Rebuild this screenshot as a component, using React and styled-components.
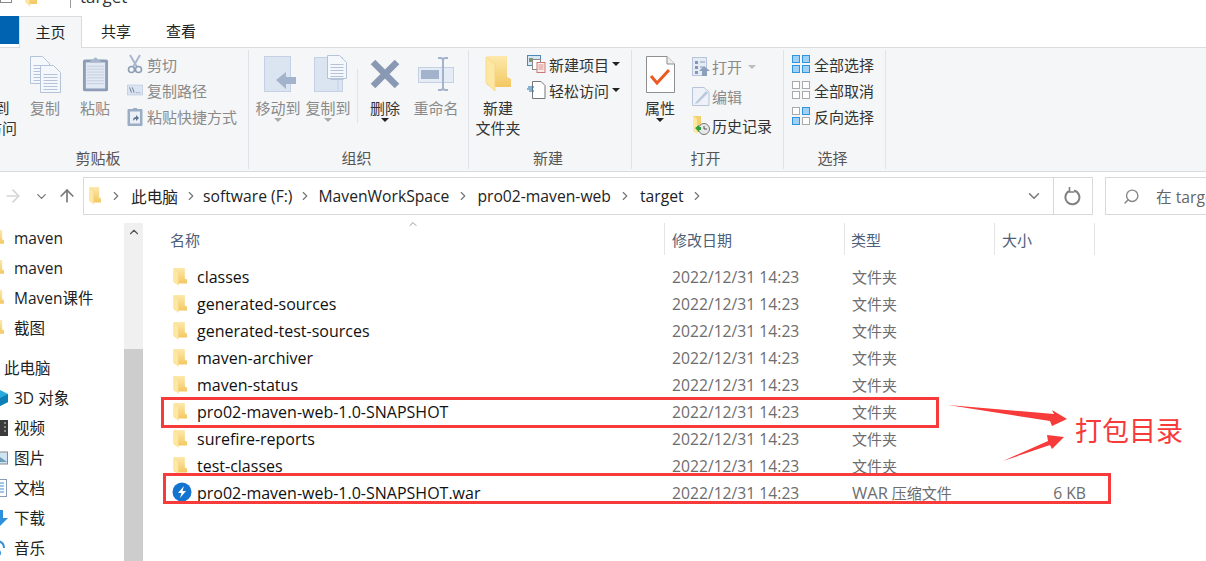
import styled, { createGlobalStyle } from 'styled-components'
import { ArrowRight, ArrowUp, ChevronDown, ChevronRight, ChevronUp, Search } from 'lucide-react'

const Global = createGlobalStyle`
  html, body { margin: 0; padding: 0; background: #fff; }
  body { font-family: "Open Sans", "Noto Sans CJK SC", sans-serif; font-size: 15px; color: #1a1a1a; }
  * { box-sizing: border-box; }
`

const Page = styled.div`
  position: relative;
  width: 1206px;
  height: 561px;
  overflow: hidden;
  background: #fff;
`

/* title bar, cut off by the top of the shot */
const TitleBar = styled.div`
  height: 16px;
  overflow: hidden;
  display: flex;
  align-items: flex-start;
`
const TitleInner = styled.div`
  display: flex;
  align-items: center;
  height: 24px;
  margin-top: -16px;
  font-size: 17px;
  color: #333;
`
const TitleIcon = styled.div`
  width: 12px;
  height: 14px;
  margin-right: 13px;
  border: 1px solid #888;
  background: #fff;
`
const TitleSep = styled.div`
  width: 1px;
  height: 24px;
  background: #999;
  margin: 0 9px 0 13px;
`

const TabBar = styled.div`
  height: 32px;
  display: flex;
  align-items: stretch;
  border-bottom: 1px solid #dadbdc;
`
const FileTab = styled.div`
  width: 19px;
  height: 28px;
  background: #0063b1;
`
const Tab = styled.div`
  width: ${p => p.$w}px;
  height: ${p => (p.$active ? 32 : 31)}px;
  display: flex;
  align-items: center;
  justify-content: center;
  padding-bottom: 2px;
  font-size: 15px;
  color: #222;
  ${p => p.$active && `
    background: #f5f6f7;
    border: 1px solid #dadbdc;
    border-bottom: 0;
  `}
`

const Ribbon = styled.div`
  height: 124px;
  display: flex;
  background: #f5f6f7;
  border-bottom: 1px solid #dadbdc;
  margin-left: -43px;
  width: 1249px;
`
const Group = styled.div`
  width: ${p => p.$w}px;
  flex: none;
  display: flex;
  flex-direction: column;
  height: 119px;
  margin-top: 2px;
  border-right: 1px solid #e1e3e6;
`
const GroupBody = styled.div`
  flex: 1;
  display: flex;
  align-items: flex-start;
  padding-left: ${p => p.$pad || 0}px;
`
const GroupLabel = styled.div`
  height: 20px;
  line-height: 20px;
  margin-bottom: 1px;
  padding-right: ${p => p.$pr || 4}px;
  text-align: center;
  font-size: 15px;
  color: #555;
`
const Large = styled.div`
  width: ${p => p.$w || 50}px;
  margin-right: ${p => p.$mr || 0}px;
  flex: none;
  display: flex;
  flex-direction: column;
  align-items: center;
  color: ${p => (p.$off ? '#8a8a8a' : '#333')};
  font-size: 15px;
  line-height: 20px;
  white-space: nowrap;
  text-align: center;
`
const LargeIcon = styled.div`
  height: 48px;
  display: flex;
  align-items: center;
  justify-content: center;
  padding-left: ${p => p.$shift || 0}px;
`
const Divider = styled.div`
  width: 1px;
  height: 54px;
  margin: 19px 5px 0 0;
  background: #e1e3e6;
`
const SmallCol = styled.div`
  display: flex;
  flex-direction: column;
  padding-top: ${p => p.$top || 1}px;
  margin-left: ${p => p.$ml || 0}px;
`
const Small = styled.div`
  height: ${p => p.$h || 26}px;
  display: flex;
  align-items: center;
  gap: ${p => p.$gap || 4}px;
  font-size: 15px;
  white-space: nowrap;
  color: ${p => (p.$off ? '#8a8a8a' : '#333')};
`
const Caret = styled.span`
  display: inline-block;
  width: 0;
  height: 0;
  border-left: 4px solid transparent;
  border-right: 4px solid transparent;
  border-top: 4px solid ${p => p.$c || '#222'};
  margin-left: ${p => p.$ml || 0}px;
  margin-top: ${p => p.$mt || 0}px;
`

const NavRow = styled.div`
  height: 51px;
  padding-top: 5px;
  display: flex;
  align-items: flex-start;
`
const NavButtons = styled.div`
  width: 83px;
  height: 38px;
  flex: none;
  display: flex;
  align-items: center;
  padding-left: 3px;
`
const NavSlot = styled.span`
  display: flex;
  margin-right: ${p => p.$mr || 0}px;
`
const AddressBar = styled.div`
  width: 1010px;
  height: 38px;
  flex: none;
  display: flex;
  align-items: center;
  border: 1px solid #d9d9d9;
`
const Crumbs = styled.div`
  flex: 1;
  display: flex;
  align-items: center;
  padding-left: 5px;
  font-size: 15.7px;
  color: #222;
`
const Crumb = styled.span`
  display: flex;
  align-items: center;
  white-space: nowrap;
`
const Sep = styled.span`
  display: flex;
  width: ${p => p.$w || 27}px;
  justify-content: center;
  color: #777;
`
const AddressEnd = styled.div`
  width: ${p => p.$w}px;
  height: 36px;
  display: flex;
  align-items: center;
  justify-content: center;
  color: #777;
  ${p => p.$line && 'border-left: 1px solid #d9d9d9;'}
`
const SearchBox = styled.div`
  width: 120px;
  height: 38px;
  flex: none;
  margin-left: 12px;
  display: flex;
  align-items: center;
  gap: 16px;
  padding-left: 17px;
  border: 1px solid #d9d9d9;
  color: #666;
  font-size: 15.7px;
  white-space: nowrap;
`
const SearchGlyph = styled(Search)`
  flex: none;
  color: #888;
  transform: scaleX(-1);
`

const Main = styled.div`
  display: flex;
  height: 338px;
`
const Sidebar = styled.div`
  width: 124px;
  flex: none;
  overflow: hidden;
`
const SideRow = styled.div`
  height: 30px;
  margin-left: ${p => (p.$root ? -18 : -8)}px;
  margin-top: ${p => (p.$root ? 10 : 0)}px;
  padding-bottom: 1px;
  display: flex;
  align-items: center;
  gap: 6px;
  font-size: 15.5px;
  color: #222;
  white-space: nowrap;
`
const SideIcon = styled.span`
  width: 16px;
  height: 18px;
  flex: none;
  display: flex;
  align-items: center;
`
const Scrollbar = styled.div`
  width: 19px;
  flex: none;
  display: flex;
  flex-direction: column;
  background: #f0f0f0;
`
const ScrollUp = styled.div`
  height: 18px;
  display: flex;
  align-items: center;
  justify-content: center;
  color: #555;
`
const ScrollThumb = styled.div`
  margin-top: 108px;
  flex: 1;
  background: #cdcdcd;
`
const Files = styled.div`
  flex: 1;
`
const HeaderRow = styled.div`
  position: relative;
  height: 32px;
  display: grid;
  grid-template-columns: 522px 180px 150px 100px;
`
const HeaderCell = styled.div`
  display: flex;
  align-items: center;
  padding-left: ${p => p.$pad || 7}px;
  border-right: 1px solid #e5e5e5;
  color: #4c607a;
  font-size: 15px;
`
const SortMark = styled.span`
  position: absolute;
  left: 264px;
  top: -5px;
  display: flex;
  color: #999;
`
const FileList = styled.div`
  padding-top: 8px;
`
const FileRow = styled.div`
  height: 27px;
  display: grid;
  grid-template-columns: 522px 180px 150px 100px;
  align-items: center;
  font-size: 16px;
  white-space: nowrap;
`
const NameCell = styled.div`
  display: flex;
  align-items: center;
  gap: 8px;
  padding-left: 30px;
  color: #111;
`
const IconSlot = styled.span`
  width: 16px;
  height: 18px;
  flex: none;
  display: flex;
  align-items: center;
  justify-content: ${p => (p.$center ? 'center' : 'flex-start')};
`
const MetaCell = styled.div`
  padding-left: 7px;
  color: #6d6d6d;
  font-size: ${p => p.$fs || 15}px;
`
const WarType = styled.span`
  font-size: 16.5px;
`
const SizeCell = styled.div`
  padding-right: 9px;
  text-align: right;
  color: #6d6d6d;
  font-size: 15.7px;
`
const WarSvg = styled.svg`
  flex: none;
  margin: -2px 0 0 -1px;
`

/* red marks the author put over the shot */
const RedBox = styled.div`
  position: absolute;
  left: ${p => p.$x}px;
  top: ${p => p.$y}px;
  width: ${p => p.$w}px;
  height: ${p => p.$h}px;
  border: 3px solid #f73a3a;
`
const Arrows = styled.svg`
  position: absolute;
  left: 940px;
  top: 400px;
`
const Note = styled.div`
  position: absolute;
  left: 1075px;
  top: 410px;
  font-family: "Noto Sans CJK SC", sans-serif;
  font-size: 27px;
  line-height: 40px;
  color: #f73a3a;
  white-space: nowrap;
`

const Folder = ({ w = 14, h = 18 }) => (
  <svg width={w} height={h} viewBox="0 0 26 36" preserveAspectRatio="none">
    <defs>
      <linearGradient id="fb" x1="0" y1="0" x2="0" y2="1">
        <stop offset="0" stopColor="#fde9ab" />
        <stop offset="1" stopColor="#f3c863" />
      </linearGradient>
    </defs>
    <path d="M2 0H22V21L26 23V31H10L2 29Z" fill="url(#fb)" />
    <path d="M1 1L10 8V35L1 27Z" fill="#fde7a2" stroke="#f1d27e" strokeWidth=".6" />
  </svg>
)

const DocLines = ({ x, y, w, h }) => (
  <g>
    <path d={`M${x} ${y}H${x + w - 7}L${x + w} ${y + 7}V${y + h}H${x}Z`} fill="#f4f7fb" stroke="#b5c3d9" />
    {[9, 12, 15, 18, 21, 24].map(d => (
      <path key={d} d={`M${x + 3} ${y + d}H${x + w - 3}`} stroke="#b5c3d9" />
    ))}
  </g>
)

const CopyIcon = () => (
  <svg width="31" height="37" viewBox="0 0 31 37">
    <DocLines x={0.5} y={0.5} w={19} h={27} />
    <DocLines x={10.5} y={9.5} w={20} h={27} />
  </svg>
)
const PasteIcon = () => (
  <svg width="27" height="38" viewBox="0 0 28 38">
    <rect x="1" y="4" width="26" height="33" rx="2" fill="#8d9db8" />
    <rect x="4" y="7" width="20" height="27" fill="#e3e9f3" />
    {[11, 14, 17, 20, 23, 26, 29].map(y => <path key={y} d={`M5 ${y}H23`} stroke="#c2cde0" />)}
    <path d="M9 4h3a2 2 0 0 1 4 0h3v3H9z" fill="#a9b6cc" />
  </svg>
)
const MoveIcon = () => (
  <svg width="33" height="37" viewBox="0 0 33 37">
    <rect x=".5" y=".5" width="26" height="35" fill="#dbe4f1" stroke="#c4d0e3" />
    <path d="M12 24L22 16V21H32V28H22V33Z" fill="#a4b3cc" />
  </svg>
)
const CopyToIcon = () => (
  <svg width="33" height="38" viewBox="0 0 33 38">
    <rect x=".5" y="2.5" width="28" height="34" fill="#dbe4f1" stroke="#c4d0e3" />
    <path d="M24 2V36" stroke="#c4d0e3" />
    <DocLines x={13.5} y={0.5} w={19} h={23} />
  </svg>
)
const DeleteIcon = () => (
  <svg width="32" height="32" viewBox="0 0 32 32">
    <path d="M4 4L28 28M28 4L4 28" stroke="#8a99b3" strokeWidth="6.5" />
  </svg>
)
const RenameIcon = () => (
  <svg width="36" height="34" viewBox="0 0 36 34">
    <rect x=".5" y="10.5" width="35" height="15" fill="#e6ecf6" stroke="#c4d0e3" />
    <rect x="3" y="13" width="18" height="9" fill="#a4b3cc" />
    <path d="M20 1h3l2 1 2-1h3M25 2V32M20 33h3l2-1 2 1h3" fill="none" stroke="#a4b3cc" strokeWidth="2" />
  </svg>
)
const Scissors = () => (
  <svg width="16" height="20" viewBox="0 0 16 20">
    <path d="M3 1L10 13M13 1L6 13" stroke="#aab8ce" strokeWidth="2" />
    <circle cx="4.5" cy="15.5" r="3" fill="none" stroke="#8d9db8" strokeWidth="1.6" />
    <circle cx="11.5" cy="15.5" r="3" fill="none" stroke="#8d9db8" strokeWidth="1.6" />
  </svg>
)
const PathIcon = () => (
  <svg width="18" height="12" viewBox="0 0 18 12">
    <rect x=".5" y=".5" width="17" height="11" fill="#dbe4f1" stroke="#c4d0e3" />
    <path d="M3 3L5 9M6 3L8 9M10 9h.8M12 9h.8M14 9h.8" stroke="#66758f" />
  </svg>
)
const ShortcutIcon = () => (
  <svg width="16" height="19" viewBox="0 0 16 19">
    <rect x=".5" y="2" width="15" height="17" rx="1" fill="#9badc6" />
    <rect x="3" y="4.5" width="10" height="12" fill="#eaeff6" />
    <path d="M6 1h4v3H6z" fill="#9badc6" />
    <path d="M6 14c0-3 1-4 3-4V8l3 3-3 3v-2c-1 0-2 .5-3 2z" fill="#5d7392" />
  </svg>
)
const NewItemIcon = () => (
  <svg width="19" height="18" viewBox="0 0 19 18">
    <rect x=".5" y=".5" width="13" height="10" fill="#d9e7f4" stroke="#4d8ab5" />
    <rect x="2" y="3" width="4" height="4" fill="#7a9a6a" />
    <rect x="5.5" y="4.5" width="8" height="10" fill="#fff" stroke="#888" />
    <rect x="10" y="7.5" width="8" height="10" fill="#fbeee6" stroke="#c77" />
    <path d="M11.5 10h5M11.5 12h5M11.5 14h5" stroke="#c77" strokeWidth=".8" />
  </svg>
)
const EasyIcon = () => (
  <svg width="19" height="18" viewBox="0 0 19 18">
    <path d="M5.5 .5H14L18 4.5V17.5H5.5Z" fill="#fff" stroke="#777" />
    <path d="M1 6H7M0 8H6M2 10H7" stroke="#1f6fa8" />
  </svg>
)
const PropertyIcon = () => (
  <svg width="29" height="37" viewBox="0 0 29 37">
    <path d="M.5 .5H21L28.5 8V36.5H.5Z" fill="#fff" stroke="#8f8f8f" />
    <path d="M21 .5V8H28.5" fill="#eee" stroke="#8f8f8f" />
    <path d="M5 20L11 27L23 14" fill="none" stroke="#ea5a22" strokeWidth="3" />
  </svg>
)
const OpenIcon = () => (
  <svg width="18" height="19" viewBox="0 0 18 19">
    <rect x=".5" y=".5" width="14" height="18" fill="#e6ecf6" stroke="#b7c4da" />
    <path d="M3 4h3v3H3zM3 9h3v3H3zM3 14h3v3H3z" fill="#8496b3" />
    <path d="M8 5h5M8 10h3" stroke="#8496b3" />
    <path d="M12 9L18 14H15V19H10V14H7Z" fill="#8c9fbd" />
  </svg>
)
const EditIcon = () => (
  <svg width="18" height="19" viewBox="0 0 18 19">
    <path d="M.5 .5H12L17 5V18.5H.5Z" fill="#eef2f8" stroke="#b7c4da" />
    <path d="M4 15L14 4L16 6L6 16L3 17Z" fill="#b9c8de" />
  </svg>
)
const HistoryIcon = () => (
  <svg width="18" height="19" viewBox="0 0 18 19">
    <path d="M1 0H9V10H14V16H4L1 15Z" fill="#f5d06f" />
    <path d="M1 0L5 3V18L1 15Z" fill="#fde7a2" />
    <circle cx="12" cy="13" r="5.5" fill="#e8e8e8" stroke="#777" />
    <path d="M12 10V13H15" fill="none" stroke="#555" />
    <path d="M3 12L7 9V11H9V14H7V16Z" fill="#2f9e3f" />
  </svg>
)
const SelectIcon = ({ on = [0, 1, 2, 3] }) => {
  const cells = [[0, 0], [10, 0], [0, 10], [10, 10]]
  return (
    <svg width="18" height="18" viewBox="0 0 18 18">
      {cells.map(([x, y], i) => (
        on.includes(i)
          ? <rect key={i} x={x + 0.5} y={y + 0.5} width="7" height="7" fill="#9fd0f5" stroke="#2f95dc" />
          : <rect key={i} x={x + 0.5} y={y + 0.5} width="7" height="7" fill="#fff" stroke="#aaa" />
      ))}
    </svg>
  )
}
const WarIcon = () => (
  <WarSvg width="20" height="20" viewBox="0 0 20 20">
    <circle cx="10" cy="10" r="9.5" fill="#1374cf" />
    <path d="M12 4L6 11H9.5L8 16L14 9H10.5Z" fill="#fff" />
  </WarSvg>
)
const RefreshIcon = () => (
  <svg width="18" height="20" viewBox="0 0 18 20">
    <path d="M5 5.2A7 7 0 1 0 10 4.5" fill="none" stroke="#808080" strokeWidth="2" />
    <path d="M5.5 1V6H10.5" fill="none" stroke="#808080" strokeWidth="1.6" />
  </svg>
)

const Cube = () => (
  <svg width="16" height="18" viewBox="0 0 16 18">
    <path d="M0 5L8 1L16 5V13L8 17L0 13Z" fill="#29a8dc" />
    <path d="M8 9L16 5V13L8 17Z" fill="#0d7fb4" />
  </svg>
)
const Film = () => (
  <svg width="16" height="18" viewBox="0 0 16 18">
    <rect x="0" y="1" width="16" height="16" fill="#3b3b3b" />
    <rect x="3" y="3" width="5" height="12" fill="#e8a52e" />
    <path d="M13 3v2M13 7v2M13 11v2" stroke="#d8d8d8" />
  </svg>
)
const Picture = () => (
  <svg width="16" height="18" viewBox="0 0 16 18">
    <rect x=".5" y="3" width="15" height="12" fill="#cfe4f3" stroke="#8a8a8a" />
    <path d="M1 13L8 8L15 13Z" fill="#6d9dbb" />
  </svg>
)
const Doc = () => (
  <svg width="15" height="18" viewBox="0 0 15 18">
    <rect x=".5" y=".5" width="14" height="17" fill="#fff" stroke="#8a9bb5" />
    {[4, 7, 10, 13].map(y => <path key={y} d={`M2 ${y}H12`} stroke="#3d8fd0" />)}
  </svg>
)
const Download = () => (
  <svg width="16" height="18" viewBox="0 0 16 18">
    <path d="M5 1H11V9H16L8 17L0 9H5Z" fill="#2e8fdc" />
  </svg>
)
const Music = () => (
  <svg width="16" height="18" viewBox="0 0 16 18">
    <path d="M6 2C10 3 12 6 12 9" fill="none" stroke="#2e8fdc" strokeWidth="2" />
    <circle cx="6" cy="14" r="3" fill="#2e8fdc" />
  </svg>
)

const sideTop = ['maven', 'maven', 'Maven课件', '截图']
const sideBottom = [
  ['3D 对象', Cube],
  ['视频', Film],
  ['图片', Picture],
  ['文档', Doc],
  ['下载', Download],
  ['音乐', Music]
]
const folders = [
  'classes',
  'generated-sources',
  'generated-test-sources',
  'maven-archiver',
  'maven-status',
  'pro02-maven-web-1.0-SNAPSHOT',
  'surefire-reports',
  'test-classes'
]
const crumbs = [
  ['此电脑', 30],
  ['software (F:)', 25],
  ['MavenWorkSpace', 26],
  ['pro02-maven-web', 28],
  ['target', 29]
]

const App = () => {
  return (
    <Page>
      <Global />
      <TitleBar>
        <TitleInner>
          <TitleIcon />
          <Folder w={12} h={22} />
          <Caret $ml={12} $c="#333" />
          <TitleSep />
          target
        </TitleInner>
      </TitleBar>

      <TabBar>
        <FileTab />
        <Tab $w={63} $active>主页</Tab>
        <Tab $w={68}>共享</Tab>
        <Tab $w={62}>查看</Tab>
      </TabBar>

      <Ribbon>
        <Group $w={292}>
          <GroupBody>
            <Large $w={60} $mr={3}>
              <LargeIcon />
              固定到
              <br />
              快速访问
            </Large>
            <Large $off>
              <LargeIcon><CopyIcon /></LargeIcon>
              复制
            </Large>
            <Large $off>
              <LargeIcon><PasteIcon /></LargeIcon>
              粘贴
            </Large>
            <SmallCol $ml={7}>
              <Small $off><IconSlot $center><Scissors /></IconSlot>剪切</Small>
              <Small $off><IconSlot $center><PathIcon /></IconSlot>复制路径</Small>
              <Small $off><IconSlot $center><ShortcutIcon /></IconSlot>粘贴快捷方式</Small>
            </SmallCol>
          </GroupBody>
          <GroupLabel $pr={9}>剪贴板</GroupLabel>
        </Group>

        <Group $w={220}>
          <GroupBody $pad={4}>
            <Large $off>
              <LargeIcon $shift={5}><MoveIcon /></LargeIcon>
              移动到
              <Caret $c="#aaa" />
            </Large>
            <Large $off $mr={4}>
              <LargeIcon $shift={5}><CopyToIcon /></LargeIcon>
              复制到
              <Caret $c="#aaa" />
            </Large>
            <Divider />
            <Large $w={44} $mr={4}>
              <LargeIcon><DeleteIcon /></LargeIcon>
              删除
              <Caret />
            </Large>
            <Large $off>
              <LargeIcon><RenameIcon /></LargeIcon>
              重命名
            </Large>
          </GroupBody>
          <GroupLabel>组织</GroupLabel>
        </Group>

        <Group $w={163}>
          <GroupBody $pad={4}>
            <Large>
              <LargeIcon><Folder w={26} h={36} /></LargeIcon>
              新建
              <br />
              文件夹
            </Large>
            <SmallCol $ml={4}>
              <Small $gap={3}><NewItemIcon />新建项目<Caret /></Small>
              <Small $gap={3}><EasyIcon />轻松访问<Caret /></Small>
            </SmallCol>
          </GroupBody>
          <GroupLabel>新建</GroupLabel>
        </Group>

        <Group $w={152}>
          <GroupBody $pad={8}>
            <Large $w={40}>
              <LargeIcon><PropertyIcon /></LargeIcon>
              属性
              <Caret />
            </Large>
            <SmallCol $ml={12} $top={2}>
              <Small $h={29.5} $gap={2} $off><OpenIcon />打开<Caret $ml={4} $c="#bbb" /></Small>
              <Small $h={29.5} $gap={2} $off><EditIcon />编辑</Small>
              <Small $h={29.5} $gap={2}><HistoryIcon />历史记录</Small>
            </SmallCol>
          </GroupBody>
          <GroupLabel>打开</GroupLabel>
        </Group>

        <Group $w={102}>
          <GroupBody $pad={8}>
            <SmallCol>
              <Small><SelectIcon />全部选择</Small>
              <Small><SelectIcon on={[]} />全部取消</Small>
              <Small><SelectIcon on={[1, 2]} />反向选择</Small>
            </SmallCol>
          </GroupBody>
          <GroupLabel>选择</GroupLabel>
        </Group>
      </Ribbon>

      <NavRow>
        <NavButtons>
          <NavSlot $mr={11}><ArrowRight size={20} color="#d5d5d5" /></NavSlot>
          <NavSlot $mr={8}><ChevronDown size={15} color="#777" /></NavSlot>
          <NavSlot><ArrowUp size={20} color="#777" /></NavSlot>
        </NavButtons>
        <AddressBar>
          <Crumbs>
            <Folder w={12} h={18} />
            {crumbs.map(([name, sep]) => (
              <Crumb key={name}>
                <Sep $w={sep}><ChevronRight size={14} /></Sep>
                {name}
              </Crumb>
            ))}
            <Sep><ChevronRight size={14} /></Sep>
          </Crumbs>
          <AddressEnd $w={38}><ChevronDown size={18} /></AddressEnd>
          <AddressEnd $w={39} $line><RefreshIcon /></AddressEnd>
        </AddressBar>
        <SearchBox>
          <SearchGlyph size={17} />
          在 target 中搜索
        </SearchBox>
      </NavRow>

      <Main>
        <Sidebar>
          {sideTop.map((name, i) => (
            <SideRow key={i}>
              <SideIcon><Folder w={12} h={16} /></SideIcon>
              {name}
            </SideRow>
          ))}
          <SideRow $root>
            <SideIcon />
            此电脑
          </SideRow>
          {sideBottom.map(([name, Icon]) => (
            <SideRow key={name}>
              <SideIcon><Icon /></SideIcon>
              {name}
            </SideRow>
          ))}
        </Sidebar>
        <Scrollbar>
          <ScrollUp><ChevronUp size={14} /></ScrollUp>
          <ScrollThumb />
        </Scrollbar>
        <Files>
          <HeaderRow>
            <HeaderCell $pad={27}>名称</HeaderCell>
            <HeaderCell>修改日期</HeaderCell>
            <HeaderCell $pad={6}>类型</HeaderCell>
            <HeaderCell>大小</HeaderCell>
            <SortMark><ChevronUp size={12} /></SortMark>
          </HeaderRow>
          <FileList>
            {folders.map(name => (
              <FileRow key={name}>
                <NameCell>
                  <IconSlot><Folder /></IconSlot>
                  {name}
                </NameCell>
                <MetaCell $fs={15.7}>2022/12/31 14:23</MetaCell>
                <MetaCell>文件夹</MetaCell>
                <SizeCell />
              </FileRow>
            ))}
            <FileRow>
              <NameCell>
                <IconSlot><WarIcon /></IconSlot>
                pro02-maven-web-1.0-SNAPSHOT.war
              </NameCell>
              <MetaCell $fs={15.7}>2022/12/31 14:23</MetaCell>
              <MetaCell><WarType>WAR</WarType> 压缩文件</MetaCell>
              <SizeCell>6 KB</SizeCell>
            </FileRow>
          </FileList>
        </Files>
      </Main>

      <RedBox $x={161} $y={397} $w={778} $h={31} />
      <RedBox $x={163} $y={473} $w={948} $h={31} />
      <Arrows width="140" height="70" viewBox="940 400 140 70">
        <path d="M948 405L1054 414L1052 410L1067 419L1052 426L1050 421Z" fill="#f73a3a" />
        <path d="M1003 461L1048 441L1047 435L1064 437L1052 449L1050 445Z" fill="#f73a3a" />
      </Arrows>
      <Note>打包目录</Note>
    </Page>
  )
}

export default App
